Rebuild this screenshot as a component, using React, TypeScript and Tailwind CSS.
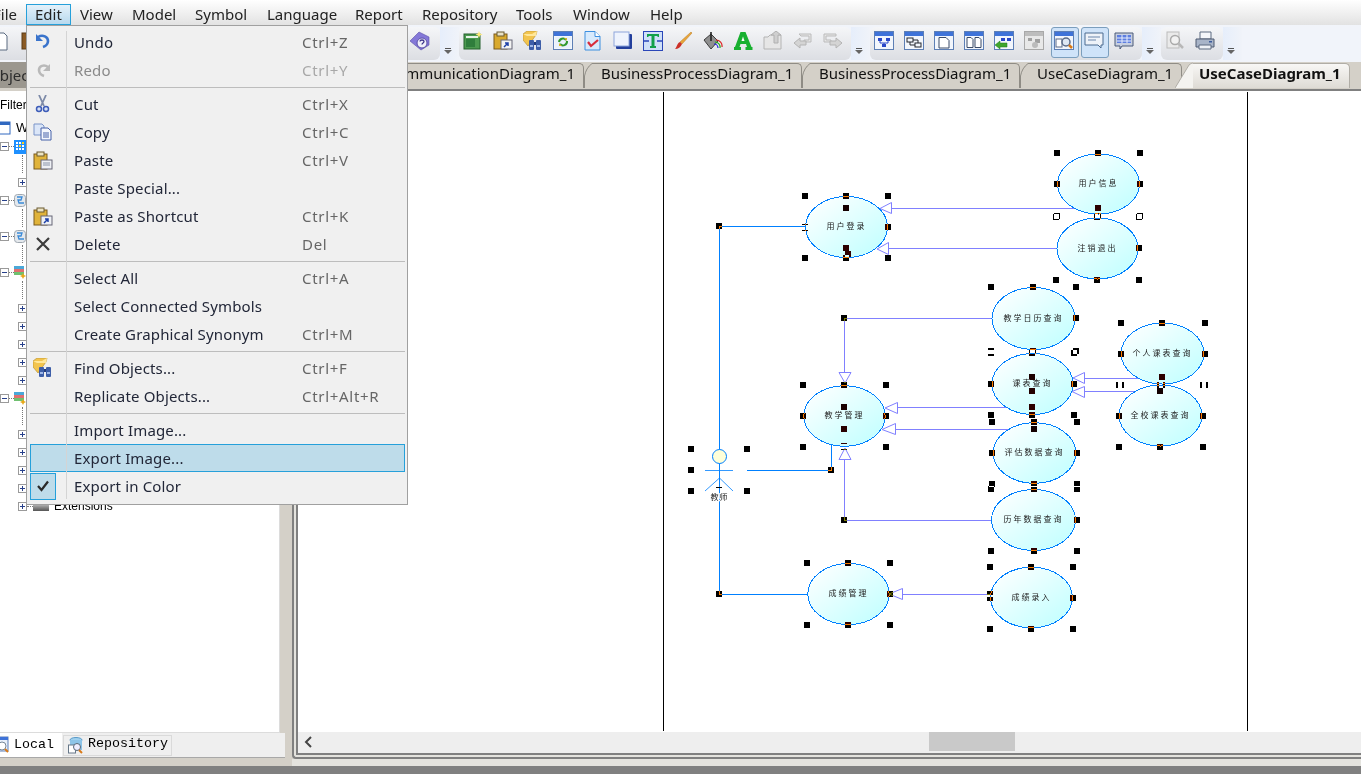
import React from "react";

const I = ({ children }: { children: React.ReactNode }) => (
  <svg width="20" height="20" viewBox="0 0 20 20">
    {children}
  </svg>
);

const WinBase = ({ children, gray = false }: { children?: React.ReactNode; gray?: boolean }) => (
  <>
    <rect x="0.5" y="0.5" width="19" height="18" fill={gray ? "#e8e8e8" : "#f2f6fc"} stroke={gray ? "#a8a8a8" : "#5d7fb5"} />
    <rect x="1" y="1" width="18" height="4" fill={gray ? "#bdbdbd" : "#3f73d8"} />
    {children}
  </>
);

const Clipboard = () => (
  <>
    <rect x="1" y="3" width="13" height="15" fill="#d9a92d" stroke="#7a5a1c" />
    <rect x="4" y="1" width="7" height="4" fill="#e9e2c8" stroke="#6a5a30" />
  </>
);

const IconNew = () => (
  <I>
    <rect x="1" y="3" width="16" height="15" fill="#4c9a50" stroke="#24602c" />
    <rect x="3" y="5" width="12" height="2" fill="#e8f4e8" />
    <rect x="3" y="8" width="9" height="8" fill="#2f7d3c" />
    <path d="M16 0l1 2.500 2.500 1-2.500 1-1 2.500-1-2.500-2.500-1 2.500-1z" fill="#ffe97a" />
  </I>
);
const IconPasteLink = () => (
  <I>
    <Clipboard />
    <rect x="8" y="9" width="11" height="9" fill="#f3f3f3" stroke="#667" />
    <path d="M11 16l4-4m-3 0h3v3" stroke="#1c3fa8" strokeWidth="1.500" fill="none" />
  </I>
);
const IconFind = () => (
  <I>
    <path d="M0 3l4-3h10l-1 4-8 11-5-6z" fill="#f2c44e" stroke="#b08a2c" strokeWidth="0.600" />
    <path d="M0 3h9l5-3-1 5H4z" fill="#ffe79a" />
    <rect x="6" y="9" width="5" height="10" rx="1" fill="#3d5ea8" />
    <rect x="13" y="9" width="5" height="10" rx="1" fill="#3d5ea8" />
    <rect x="11" y="11" width="2" height="3" fill="#223a78" />
    <rect x="7" y="14" width="3" height="2" fill="#9fb8e8" />
    <rect x="14" y="14" width="3" height="2" fill="#9fb8e8" />
  </I>
);
const IconRefresh = () => (
  <I>
    <WinBase>
      <rect x="2" y="6" width="16" height="11" fill="#e9f1fb" />
      <path d="M6 11a4 4 0 0 1 7-2M14 10a4 4 0 0 1-7 3" stroke="#2f9a2f" strokeWidth="2" fill="none" />
      <path d="M11 7l3 0v3zM9 15l-3 0v-3z" fill="#d5b52a" />
    </WinBase>
  </I>
);
const IconDocCheck = () => (
  <I>
    <path d="M2 .5h10l5 5v13.500H2z" fill="#d8eafc" stroke="#3d8fe0" />
    <path d="M12 .5v5h5" fill="#fff" stroke="#3d8fe0" />
    <path d="M5 11l3 4 7-6" stroke="#d82c3c" strokeWidth="2.200" fill="none" />
  </I>
);
const IconBox = () => (
  <I>
    <rect x="3" y="3" width="16" height="15" rx="1" fill="#233f9c" />
    <rect x="1" y="1" width="15" height="14" fill="#eef3fd" stroke="#8ea6dc" />
  </I>
);
const IconT = () => (
  <I>
    <rect x="0.5" y="0.5" width="19" height="19" fill="#cfe0f8" stroke="#2a46b8" />
    <path d="M4 3h12v3h-1.500V5H11.500v10H13v2H7v-2h1.500V5H5.500v1H4z" fill="#12a04a" />
    <path d="M1 10h5M19 10h-5" stroke="#2a46b8" strokeWidth="1.500" />
  </I>
);
const IconBrush = () => (
  <I>
    <path d="M18 1l1 1-10 11-2-2z" fill="#e8a53a" stroke="#b87a20" strokeWidth="0.500" />
    <path d="M7 11l2 2c-1 3-4 5-7 5 2-2 2-6 5-7z" fill="#cc3028" />
  </I>
);
const IconBucket = () => (
  <I>
    <path d="M1 9l7-6 7 7-7 8z" fill="#8f8f8f" stroke="#3c3c3c" />
    <path d="M8 1v9" stroke="#222" strokeWidth="1.600" />
    <path d="M13 9a6 6 0 0 1 6 7" stroke="#d22" strokeWidth="1.200" fill="none" />
    <path d="M12 11a5 5 0 0 1 5 6" stroke="#2a2" strokeWidth="1.200" fill="none" />
    <path d="M11 13a4 4 0 0 1 4 4" stroke="#22d" strokeWidth="1.200" fill="none" />
  </I>
);
const IconA = () => (
  <I>
    <path d="M7.500 1h5l6 15h1v3h-7v-3h1.500l-1-3H7.500l-1 3H8v3H1v-3h1z" fill="#18b030" />
    <path d="M8.500 10h3L10 5.500z" fill="#fff" />
  </I>
);
const IconGrayBox = () => (
  <I>
    <path d="M1 6h4l2-2h11v14H1z" fill="#e6e6e6" stroke="#b4b4b4" />
    <path d="M11 12V4h-3l5-4 5 4h-3v8z" fill="#cfcfcf" stroke="#b0b0b0" />
  </I>
);
const IconBack = () => (
  <I>
    <path d="M6 3h12v8H11v-2h5V5H8z" fill="#e6e6e6" stroke="#bbb" />
    <path d="M7 7L1 12l6 5v-3h6V10H7z" fill="#d4d4d4" stroke="#b4b4b4" />
  </I>
);
const IconFwd = () => (
  <I>
    <path d="M1 3h12v2H3v4h5v2H1z" fill="#e6e6e6" stroke="#bbb" />
    <path d="M13 7l6 5-6 5v-3H7V10h6z" fill="#d4d4d4" stroke="#b4b4b4" />
  </I>
);
const IconTree = () => (
  <I>
    <WinBase>
      <rect x="4" y="7" width="4" height="3" fill="#2a48c8" />
      <rect x="12" y="7" width="4" height="3" fill="#2a48c8" />
      <rect x="8" y="13" width="4" height="3" fill="#2a48c8" />
      <path d="M6 10v2h4v1M14 10v2h-4" stroke="#2a48c8" fill="none" />
    </WinBase>
  </I>
);
const IconTree2 = () => (
  <I>
    <WinBase>
      <rect x="3" y="7" width="6" height="4" fill="#f2f6fc" stroke="#22262e" />
      <rect x="11" y="12" width="6" height="4" fill="#f2f6fc" stroke="#22262e" />
      <path d="M9 9h5v3M6 11v3h5" stroke="#22262e" fill="none" />
    </WinBase>
  </I>
);
const IconDocW = () => (
  <I>
    <WinBase>
      <path d="M5 6.500h7l3 3v7.500H5z" fill="#fff" stroke="#3a4a66" />
    </WinBase>
  </I>
);
const IconDocs = () => (
  <I>
    <WinBase>
      <path d="M3 6.500h4l2 2v8H3zM11 6.500h4l2 2v8h-6z" fill="#fff" stroke="#3a4a66" />
    </WinBase>
  </I>
);
const IconTreeArrow = () => (
  <I>
    <WinBase>
      <rect x="7" y="7" width="4" height="3" fill="#2a48c8" />
      <rect x="13" y="7" width="4" height="3" fill="#2a48c8" />
      <path d="M1 14l5-4v2h7v4H6v2z" fill="#3fa52c" stroke="#1f7a18" strokeWidth="0.500" />
    </WinBase>
  </I>
);
const IconTreeGray = () => (
  <I>
    <WinBase gray>
      <rect x="4" y="7" width="4" height="3" fill="#a0a0a0" />
      <rect x="11" y="8" width="5" height="4" fill="#a0a0a0" />
      <circle cx="11" cy="14" r="3" fill="#bbb" />
    </WinBase>
  </I>
);
const IconWinZoom = () => (
  <I>
    <WinBase>
      <rect x="2" y="8" width="6" height="8" fill="#fff" stroke="#5a6a88" />
      <circle cx="12" cy="11" r="4" fill="#dfe8f4" stroke="#5a6a88" strokeWidth="1.500" />
      <path d="M15 14l3 3" stroke="#d87a18" strokeWidth="2.500" />
    </WinBase>
  </I>
);
const IconComment = () => (
  <I>
    <path d="M1 2h18v12h-2v3l-3-3H1z" fill="#eef2f8" stroke="#4a6a90" />
    <path d="M4 6h12M4 9h8" stroke="#6a86ac" />
  </I>
);
const IconTable = () => (
  <I>
    <path d="M1 2h18v13H8l-2 3v-3H1z" fill="#c8d0e0" stroke="#4a5a78" />
    <rect x="3" y="4" width="14" height="8" fill="#5d7ee0" />
    <path d="M3 7h14M3 10h14M8 4v8M13 4v8" stroke="#e8eefc" />
  </I>
);
const IconPreview = () => (
  <I>
    <rect x="2" y="1" width="12" height="16" fill="#eaeaea" stroke="#bcbcbc" />
    <circle cx="10" cy="9" r="4.500" fill="#f2f2f2" stroke="#aaa" strokeWidth="1.500" />
    <path d="M13 12l5 5" stroke="#b8b8b8" strokeWidth="2.500" />
  </I>
);
const IconPrint = () => (
  <I>
    <path d="M5 1h11v7H5z" fill="#f4f6fa" stroke="#5d6a80" />
    <path d="M1 8h18v8H1z" fill="#a8b4c8" stroke="#4e5a70" />
    <path d="M4 14h12v4H4z" fill="#eef1f6" stroke="#5d6a80" />
    <rect x="14" y="10" width="3" height="1.500" fill="#3a5a9a" />
  </I>
);
const IconHelpBook = () => (
  <I>
    <path d="M0 10L9 1l10 5v8l-8 5z" fill="#8478d8" stroke="#5a50a8" strokeWidth="0.600" />
    <circle cx="12" cy="12" r="5" fill="#f0f0fa" stroke="#5a50a8" />
    <path d="M10 10.500c0-2 4-2 4 0 0 1.500-2 1.500-2 3" stroke="#3c348a" strokeWidth="1.300" fill="none" />
  </I>
);
const IconNewDoc = () => (
  <I>
    <path d="M3 2h11l3 3v14H3z" fill="#fff" stroke="#5a6a80" />
    <path d="M0 0l4 1 1 3" fill="#f2c44e" stroke="#d9a92d" />
  </I>
);
const IconBrown = () => (
  <I>
    <rect x="2" y="2" width="15" height="16" fill="#8a5a24" stroke="#5a3a14" />
  </I>
);

const groupOne = [IconNewDoc, IconBrown, IconFind, IconFind, IconFind, IconFind, IconFind, IconFind, IconFind, IconFind, IconFind, IconFind, IconFind, IconFind, IconHelpBook];
const groupTwo = [IconNew, IconPasteLink, IconFind, IconRefresh, IconDocCheck, IconBox, IconT, IconBrush, IconBucket, IconA, IconGrayBox, IconBack, IconFwd];
const groupThree = [IconTree, IconTree2, IconDocW, IconDocs, IconTreeArrow, IconTreeGray];

const Handle = () => (
  <div className="w-[19px] h-[33px] flex flex-col items-center justify-end pb-[6px] pr-[3px] bg-gradient-to-r from-[#e6eefb] to-[#f0f3f9]">
    <div className="w-[6px] h-[1px] bg-[#555]" />
    <svg width="8" height="4" viewBox="0 0 8 4" className="mt-[1px]">
      <path d="M0 0h8L4 4z" fill="#666" />
    </svg>
  </div>
);

const Cell = ({ children }: { children: React.ReactNode }) => (
  <div className="w-[30px] h-[33px] pl-[3px] pt-[4px] shrink-0">{children}</div>
);

const ActiveCell = ({ children }: { children: React.ReactNode }) => (
  <div className="w-[28px] h-[31px] mr-[2px] pl-[2px] pt-[3px] shrink-0 rounded-[3px] border border-[#7b9ebd] bg-[#cfe3f9]">{children}</div>
);

const Group = ({ children, extra }: { children: React.ReactNode; extra: string }) => (
  <div className={"flex h-[33px] px-[1px] rounded-[6px] bg-gradient-to-b from-[#f5f6f8] to-[#dcdee3] shrink-0 " + extra}>{children}</div>
);

const Toolbar = () => (
  <div className="h-[37px] pt-[2px] flex bg-[#f1f4fa] shrink-0">
    <Group extra="w-[450px] -ml-[10px] justify-end pr-[3px]">
      {groupOne.map((C, i) => (
        <Cell key={i}>
          <C />
        </Cell>
      ))}
    </Group>
    <Handle />
    <Group extra="">
      {groupTwo.map((C, i) => (
        <Cell key={i}>
          <C />
        </Cell>
      ))}
    </Group>
    <Handle />
    <Group extra="">
      {groupThree.map((C, i) => (
        <Cell key={i}>
          <C />
        </Cell>
      ))}
      <ActiveCell>
        <IconWinZoom />
      </ActiveCell>
      <ActiveCell>
        <IconComment />
      </ActiveCell>
      <Cell>
        <IconTable />
      </Cell>
    </Group>
    <Handle />
    <Group extra="">
      <Cell>
        <IconPreview />
      </Cell>
      <Cell>
        <IconPrint />
      </Cell>
    </Group>
    <Handle />
  </div>
);

const menus = [
  { t: "Edit", c: "w-[45px] pl-[8px] border border-[#26a0da] bg-gradient-to-b from-[#e4f1fa] to-[#b8d9ee] h-[21px] mt-[4px]" },
  { t: "View", c: "w-[52px] pl-[9px]" },
  { t: "Model", c: "w-[63px] pl-[9px]" },
  { t: "Symbol", c: "w-[72px] pl-[9px]" },
  { t: "Language", c: "w-[88px] pl-[9px]" },
  { t: "Report", c: "w-[67px] pl-[9px]" },
  { t: "Repository", c: "w-[94px] pl-[9px]" },
  { t: "Tools", c: "w-[57px] pl-[9px]" },
  { t: "Window", c: "w-[77px] pl-[9px]" },
  { t: "Help", c: "w-[60px] pl-[9px]" },
];

const MenuBar = () => (
  <div className="h-[25px] flex bg-gradient-to-b from-[#ffffff] to-[#e2e2e2] shrink-0 text-[15px] text-[#222] font-['Noto_Sans'] whitespace-nowrap">
    <div className="w-[26px] h-[25px] pt-[4px] pr-[9px] flex justify-end leading-[21px] shrink-0">
      <span>File</span>
    </div>
    {menus.map((m) => (
      <div key={m.t} className={"leading-[19px] shrink-0 " + (m.t === "Edit" ? m.c : m.c + " pt-[5px]")}>
        {m.t}
      </div>
    ))}
  </div>
);

type Item = { t: string; k?: string; d?: boolean; icon?: React.ReactNode; cls?: string };

const MIconUndo = () => (
  <svg width="18" height="18" viewBox="0 0 18 18">
    <path d="M4 4c5-3 10 0 10 4 0 3-2 5-5 6" stroke="#3a74cc" strokeWidth="2.600" fill="none" />
    <path d="M2 1v7h7z" fill="#3a74cc" />
  </svg>
);
const MIconRedo = () => (
  <svg width="18" height="18" viewBox="0 0 18 18">
    <path d="M14 6c-4-3-9-1-9 3 0 3 2 5 5 6" stroke="#b9b9b9" strokeWidth="2.600" fill="none" />
    <path d="M16 3v7H9z" fill="#b9b9b9" />
  </svg>
);
const MIconCut = () => (
  <svg width="18" height="18" viewBox="0 0 18 18">
    <path d="M5 0l5 11M12 0L7 11" stroke="#7d8aa8" strokeWidth="1.800" />
    <circle cx="5" cy="14" r="2.500" fill="#d6e0f4" stroke="#3d5cb8" strokeWidth="1.500" />
    <circle cx="12" cy="14" r="2.500" fill="#d6e0f4" stroke="#3d5cb8" strokeWidth="1.500" />
  </svg>
);
const MIconCopy = () => (
  <svg width="20" height="18" viewBox="0 0 20 18">
    <path d="M1 1h8l2 2v9H1z" fill="#dbe6f8" stroke="#7a94c8" />
    <path d="M8 5h7l3 3v9H8z" fill="#f4f7fd" stroke="#4560a8" />
    <path d="M10 10h6M10 12h6M10 14h6" stroke="#4560a8" />
  </svg>
);
const MIconPaste = () => (
  <svg width="20" height="19" viewBox="0 0 20 19">
    <rect x="1" y="3" width="13" height="15" fill="#e0b33a" stroke="#7a5a1c" />
    <rect x="4" y="1" width="7" height="4" fill="#ece4c4" stroke="#6a5a30" />
    <rect x="8" y="9" width="11" height="9" fill="#eef0f4" stroke="#667" />
    <path d="M10 12h7M10 14h7" stroke="#8a94a8" />
  </svg>
);
const MIconPasteLink = () => (
  <svg width="20" height="19" viewBox="0 0 20 19">
    <rect x="1" y="3" width="13" height="15" fill="#e0b33a" stroke="#7a5a1c" />
    <rect x="4" y="1" width="7" height="4" fill="#ece4c4" stroke="#6a5a30" />
    <rect x="8" y="9" width="11" height="9" fill="#eef0f4" stroke="#667" />
    <path d="M11 16l4-4m-3 0h3v3" stroke="#1c3fa8" strokeWidth="1.500" fill="none" />
  </svg>
);
const MIconDelete = () => (
  <svg width="16" height="16" viewBox="0 0 16 16">
    <path d="M2 2l12 12M14 2L2 14" stroke="#3c3c3c" strokeWidth="2.200" />
  </svg>
);

const rows: (Item | "sep")[] = [
  { t: "Undo", k: "Ctrl+Z", icon: <MIconUndo /> },
  { t: "Redo", k: "Ctrl+Y", d: true, icon: <MIconRedo /> },
  "sep",
  { t: "Cut", k: "Ctrl+X", icon: <MIconCut /> },
  { t: "Copy", k: "Ctrl+C", icon: <MIconCopy /> },
  { t: "Paste", k: "Ctrl+V", icon: <MIconPaste /> },
  { t: "Paste Special..." },
  { t: "Paste as Shortcut", k: "Ctrl+K", icon: <MIconPasteLink /> },
  { t: "Delete", k: "Del", icon: <MIconDelete /> },
  "sep",
  { t: "Select All", k: "Ctrl+A" },
  { t: "Select Connected Symbols" },
  { t: "Create Graphical Synonym", k: "Ctrl+M" },
  "sep",
  { t: "Find Objects...", k: "Ctrl+F", icon: <IconFind /> },
  { t: "Replicate Objects...", k: "Ctrl+Alt+R" },
  "sep",
  { t: "Import Image..." },
  { t: "Export Image...", cls: "hl" },
  { t: "Export in Color", cls: "chk" },
];

const MenuRow = ({ item }: { item: Item }) => (
  <div
    className={
      "h-[28px] flex items-center relative " +
      (item.cls === "hl" ? "bg-[#bedcea] border border-[#26a0da] " : "border border-transparent ") +
      (item.d ? "text-[#8a8a8a]" : "text-[#222738]")
    }
  >
    <div
      className={
        "w-[26px] h-[27px] flex items-center justify-center shrink-0 -ml-[1px] " +
        (item.cls === "chk" ? "bg-[#bedcea] border border-[#26a0da]" : "")
      }
    >
      {item.cls === "chk" ? (
        <svg width="12" height="12" viewBox="0 0 12 12">
          <path d="M1 6l3.500 4L11 1.500" stroke="#2a2a2a" strokeWidth="2.200" fill="none" />
        </svg>
      ) : (
        item.icon
      )}
    </div>
    <div className="w-[246px] pl-[18px] shrink-0 tracking-[0.15px]">{item.t}</div>
    <div className={"tracking-[0.7px] " + (item.d ? "text-[#a8a8a8]" : "text-[#666]")}>{item.k}</div>
  </div>
);

const Menu = () => (
  <div className="absolute left-[26px] top-[25px] w-[382px] h-[480px] border border-[#a0a0a0] bg-[#f0f0f0] pt-[2px] pl-[3px] pr-[2px] font-['Noto_Sans'] text-[15px] whitespace-nowrap z-10">
    <div className="absolute left-[39px] top-[5px] bottom-[5px] w-[1px] bg-[#d4d4d4] z-10" />
    {rows.map((r, i) =>
      r === "sep" ? (
        <div key={i} className="h-[6px] flex items-center">
          <div className="h-[1px] w-full bg-[#bdbdbd]" />
        </div>
      ) : (
        <MenuRow key={i} item={r} />
      )
    )}
  </div>
);

const Box = ({ plus }: { plus?: boolean }) => (
  <div className="w-[9px] h-[9px] border border-[#9a9a9a] bg-white relative shrink-0">
    <div className="absolute left-[1px] top-[3px] w-[5px] h-[1px] bg-[#27408b]" />
    {plus && <div className="absolute left-[3px] top-[1px] w-[1px] h-[5px] bg-[#27408b]" />}
  </div>
);

const TreeGrid = () => (
  <svg width="12" height="15" viewBox="0 0 12 15" className="shrink-0">
    <rect x="0" y="1" width="12" height="14" fill="#1e90ff" />
    <rect x="2" y="3" width="2" height="2" fill="#fff" />
    <rect x="5" y="3" width="2" height="2" fill="#fff" />
    <rect x="8" y="3" width="2" height="2" fill="#ffd21e" />
    <rect x="2" y="6" width="2" height="2" fill="#fff" />
    <rect x="5" y="6" width="2" height="2" fill="#ffd21e" />
    <rect x="8" y="6" width="2" height="2" fill="#fff" />
    <rect x="2" y="9" width="2" height="2" fill="#fff" />
    <rect x="5" y="9" width="2" height="2" fill="#fff" />
    <rect x="8" y="9" width="2" height="2" fill="#fff" />
  </svg>
);
const TreeFlow = () => (
  <svg width="12" height="15" viewBox="0 0 12 15" className="shrink-0">
    <rect x="0.500" y="1.500" width="11" height="12" rx="3" fill="#e4e8ec" stroke="#a0a8b0" />
    <path d="M3 4h5l-1 3H4l1 3h5" stroke="#3a8ad8" strokeWidth="1.300" fill="none" />
  </svg>
);
const TreeStack = () => (
  <svg width="12" height="15" viewBox="0 0 12 15" className="shrink-0">
    <rect x="0" y="1" width="10" height="3" fill="#4aa8d8" />
    <rect x="0" y="4" width="10" height="3" fill="#e07070" />
    <rect x="0" y="7" width="10" height="3" fill="#70c070" />
    <path d="M9 8l1 2 2 1-2 1-1 2-1-2-2-1 2-1z" fill="#e8a818" />
  </svg>
);

const treeRows: number[] = [0, 2, 1, 0, 2, 0, 2, 0, 2, 1, 1, 1, 1, 1, 0, 2, 1, 1, 1, 1];
const treeIcons: Record<number, React.ReactNode> = {
  0: <TreeGrid />,
  3: <TreeFlow />,
  5: <TreeFlow />,
  7: <TreeStack />,
  14: <TreeStack />,
};

const LeftPanel = () => (
  <div className="w-[285px] flex flex-col shrink-0">
    <div className="h-[26px] bg-[#9b978f] text-[15px] leading-[26px] text-[#2c2c2c] font-['Noto_Sans'] -indent-[12px] overflow-hidden shrink-0 whitespace-nowrap">Object Browser</div>
    <div className="h-[3px] bg-[#d4d0c8] shrink-0" />
    <div className="flex-1 bg-white border-r border-b border-[#dcdcdc] mr-[5px] font-['Liberation_Sans'] text-[12px] text-black overflow-hidden">
      <div className="h-[28px] pt-[7px] leading-[14px]">Filter:</div>
      <div className="h-[18px] flex items-center">
        <svg width="11" height="14" viewBox="0 0 11 14" className="shrink-0">
          <rect x="-3" y="1" width="13" height="12" fill="#fff" stroke="#3068c0" />
          <rect x="-3" y="1" width="13" height="3" fill="#3068c0" />
        </svg>
        <span className="ml-[5px] text-[13px]">Workspace</span>
      </div>
      {treeRows.map((lv, i) => (
        <div key={i} className="h-[18px] flex items-center">
          {lv === 0 && (
            <>
              <Box />
              <div className="w-[5px] border-t border-dotted border-[#777]" />
              {treeIcons[i]}
            </>
          )}
          {lv === 1 && (
            <div className="ml-[18px]">
              <Box plus />
            </div>
          )}
          {lv === 2 && <div className="ml-[22px] h-[18px] border-l border-dotted border-[#777]" />}
        </div>
      ))}
      <div className="h-[18px] flex items-center">
        <div className="ml-[18px]">
          <Box plus />
        </div>
        <div className="w-[6px] border-t border-dotted border-[#777]" />
        <div className="w-[16px] h-[10px] bg-gradient-to-b from-[#f0f0f0] to-[#555]" />
        <span className="ml-[5px]">Extensions</span>
      </div>
    </div>
    <div className="h-[25px] bg-[#efefef] border-b border-[#a8a8a8] flex shrink-0 font-['Liberation_Mono'] text-[13.33px] text-black">
      <div className="w-[62px] bg-white flex items-center">
        <svg width="10" height="18" viewBox="0 0 10 18" className="shrink-0">
          <rect x="-8" y="1" width="16" height="14" fill="#e8f0fb" stroke="#5d7fb5" />
          <rect x="-8" y="1" width="16" height="3" fill="#3f73d8" />
          <circle cx="2" cy="10" r="4" fill="#fff" stroke="#789" />
          <path d="M5 13l3 3" stroke="#d87a18" strokeWidth="2" />
        </svg>
        <span className="ml-[4px]">Local</span>
      </div>
      <div className="ml-[1px] w-[109px] h-[21px] mt-[2px] border border-[#dadada] flex items-center pl-[4px]">
        <svg width="16" height="17" viewBox="0 0 16 17" className="shrink-0">
          <ellipse cx="8" cy="3" rx="6" ry="2.500" fill="#9fd0ee" stroke="#5a9ac8" />
          <rect x="2" y="3" width="12" height="10" fill="#8cc4e8" />
          <rect x="0.500" y="8" width="7" height="8" fill="#fff" stroke="#678" />
          <circle cx="9" cy="10" r="3.500" fill="#eef" stroke="#567" />
          <path d="M11 13l3 3" stroke="#d87a18" strokeWidth="2" />
        </svg>
        <span className="ml-[4px] -mt-[3px]">Repository</span>
      </div>
    </div>
    <div className="h-[8px] shrink-0" />
  </div>
);

const Slant = ({ active }: { active?: boolean }) =>
  active ? (
    <svg width="18" height="26" viewBox="0 0 18 26" className="shrink-0 relative z-[1]">
      <path d="M0 26L14 3q2-2 4-2V26z" fill="#f4f3f0" />
      <path d="M0 26L14 3q2-2 4-2" fill="none" stroke="#b0ada6" />
    </svg>
  ) : (
    <svg width="8" height="26" viewBox="0 0 8 26" className="shrink-0">
      <path d="M0.500 26V14Q2 6 8 1.500" fill="none" stroke="#8f8c85" />
    </svg>
  );

const Tab = ({ t, w }: { t: string; w: string }) => (
  <>
    <Slant />
    <div className={"h-[25px] mt-[1px] border-t border-r border-[#8f8c85] rounded-tr-[5px] pl-[9px] leading-[18px] shrink-0 " + w}>{t}</div>
  </>
);

const TabRow = () => (
  <div className="h-[27px] flex bg-[#d4d0c8] shrink-0 font-['Noto_Sans'] text-[15px] text-[#111] whitespace-nowrap overflow-hidden">
    <div className="w-[292px] h-[25px] mt-[1px] border-t border-r border-[#8f8c85] rounded-tr-[5px] pr-[8px] flex justify-end leading-[18px] shrink-0">CommunicationDiagram_1</div>
    <Tab t="BusinessProcessDiagram_1" w="w-[210px]" />
    <Tab t="BusinessProcessDiagram_1" w="w-[210px]" />
    <Tab t="UseCaseDiagram_1" w="w-[154px]" />
    <div className="-ml-[7px] flex shrink-0">
      <Slant active />
      <div className="w-[157px] h-[25px] mt-[1px] border-t border-r border-[#b0ada6] rounded-tr-[5px] pl-[6px] leading-[18px] font-bold bg-gradient-to-b from-[#f8f7f5] to-[#dedbd5]">UseCaseDiagram_1</div>
    </div>
  </div>
);

type El = { cx: number; cy: number; rx: number; ry: number; t: string; hx: number[]; hy: number[] };
const els: El[] = [
  { cx: 846.5, cy: 227, rx: 41, ry: 30.5, t: "用户登录", hx: [805, 846, 888], hy: [196, 227, 258] },
  { cx: 1098.5, cy: 184, rx: 41, ry: 30, t: "用户信息", hx: [1057, 1098, 1140], hy: [153, 184, 216] },
  { cx: 1097.5, cy: 248.5, rx: 40.5, ry: 30.5, t: "注销退出", hx: [1056, 1097, 1139], hy: [217, 248, 280] },
  { cx: 1033.5, cy: 318.5, rx: 41.5, ry: 31, t: "教学日历查询", hx: [991, 1033, 1076], hy: [287, 318, 351] },
  { cx: 1032.5, cy: 384, rx: 40.5, ry: 30.5, t: "课表查询", hx: [991, 1032, 1074], hy: [353, 384, 415] },
  { cx: 1034.5, cy: 453, rx: 41.3, ry: 30.3, t: "评估数据查询", hx: [992, 1034, 1077], hy: [422, 453, 484] },
  { cx: 1033.5, cy: 520, rx: 42, ry: 30.5, t: "历年数据查询", hx: [991, 1034, 1077], hy: [489, 520, 551] },
  { cx: 1162.5, cy: 353.5, rx: 41.3, ry: 30.5, t: "个人课表查询", hx: [1121, 1162, 1205], hy: [323, 354, 385] },
  { cx: 1160.5, cy: 415.5, rx: 41.3, ry: 30.5, t: "全校课表查询", hx: [1119, 1160, 1203], hy: [385, 416, 447] },
  { cx: 844.5, cy: 416, rx: 40.7, ry: 30.3, t: "教学管理", hx: [803, 844, 886], hy: [385, 416, 447] },
  { cx: 848.5, cy: 594, rx: 40.7, ry: 30.5, t: "成绩管理", hx: [807, 848, 890], hy: [563, 594, 625] },
  { cx: 1031.5, cy: 597.5, rx: 41, ry: 30.3, t: "成绩录入", hx: [990, 1031, 1073], hy: [567, 598, 629] },
];

const elHandles = els.flatMap((e) => {
  const out: [number, number][] = [];
  e.hx.forEach((x, i) =>
    e.hy.forEach((y, j) => {
      if (!(i === 1 && j === 1)) out.push([x, y]);
    })
  );
  return out;
});

const extraHandles: [number, number][] = [
  [846, 208], [846, 248], [848, 254], [805, 228],
  [1098, 208], [1056, 248], [991, 318], [991, 520],
  [844, 407], [844, 429], [844, 446], [807, 594],
  [1032, 377], [1032, 391], [1032, 407], [1034, 429],
  [1162, 377], [1160, 391], [990, 594],
  [719, 226], [719, 594], [844, 318], [844, 520], [831, 470],
  [691, 449], [747, 449], [691, 470], [691, 491], [747, 491],
];

const purple = "#8080ff";
const blue = "#0080ff";

const Diagram = () => (
  <svg className="absolute inset-0 w-full h-full font-['Noto_Sans_CJK_SC']" width="1063" height="641">
    <defs>
      <linearGradient id="g" x1="0" y1="0" x2="1" y2="1">
        <stop offset="0.1" stopColor="#fbffff" />
        <stop offset="0.9" stopColor="#c4ffff" />
      </linearGradient>
    </defs>
    <rect width="1063" height="641" fill="#fff" />
    <g transform="translate(-298 -91)">
      <g shapeRendering="crispEdges" stroke="#000" fill="none">
        <path d="M663.500 92v639M1247.500 92v639" />
      </g>
      <g shapeRendering="crispEdges" fill="none" stroke={blue}>
        <path d="M806 226.500H719.500V594.500H808M747 470.500H831.500V440" />
      </g>
      <g shapeRendering="crispEdges" fill="none" stroke={purple}>
        <path d="M1075 208.500H890M1060 248.500H888M1000 318.500H844.500V372M1010 407.500H897M1010 429.500H895M1000 520.500H844.500V459M1140 378.500H1084M1136 391.500H1084M1000 594.500H902" />
      </g>
      {els.map((e) => (
        <ellipse key={e.t} cx={e.cx} cy={e.cy} rx={e.rx} ry={e.ry} fill="url(#g)" stroke={blue} shapeRendering="crispEdges" />
      ))}
      <g fill="#fff" stroke={purple}>
        <path d="M880 208.500L891.500 202.500V213.500z" />
        <path d="M877 249L888.500 242.500V254.500z" />
        <path d="M845 383L839 372.500H851z" />
        <path d="M885 408L897.500 402.500V413.500z" />
        <path d="M882 429.500L895.500 423.500V434.500z" />
        <path d="M845 448L839 459.500H851z" />
        <path d="M1073 378L1084.500 372.500V383.500z" />
        <path d="M1072 391.500L1084.500 386.500V397.500z" />
        <path d="M889 594L902.500 588.500V599.500z" />
      </g>
      <circle cx="719.500" cy="456.500" r="7" fill="#ffffd8" stroke={blue} />
      <path d="M705 470.500H733M719.500 464V478M719.500 478L705 491M719.500 478L733 491" stroke={blue} fill="none" strokeOpacity="0.8" />
      <rect x="716" y="487" width="6" height="1" fill="#000" />
      <text x="719.500" y="500" fontSize="8" textAnchor="middle" letterSpacing="1" fill="#222" stroke="#fff" strokeWidth="2" paintOrder="stroke">教师</text>
      {els.map((e) => (
        <text key={e.t} x={e.cx} y={e.cy + 2} fontSize="8" textAnchor="middle" letterSpacing="2" fill="#222">
          {e.t}
        </text>
      ))}
      {[...elHandles, ...extraHandles].map(([x, y], i) => (
        <rect key={i} x={x - 3} y={y - 3} width="6" height="6" fill="#fff" className="mix-blend-difference" shapeRendering="crispEdges" />
      ))}
    </g>
  </svg>
);

const MainPane = () => (
  <div className="flex-1 flex flex-col min-w-0">
    <TabRow />
    <div className="h-[2px] bg-[#808080] shrink-0" />
    <div className="flex-1 border-l-2 border-b-2 border-[#808080] rounded-bl-[4px] pl-[2px] pb-[2px] bg-[#e4e3de] flex flex-col min-h-0">
      <div className="flex-1 border-l-2 border-b-2 border-[#808080] flex flex-col min-h-0">
        <div className="flex-1 relative bg-white overflow-hidden">
          <Diagram />
        </div>
        <div className="h-[21px] bg-[#eeeeee] flex shrink-0">
          <svg width="16" height="20" viewBox="0 0 16 20" className="ml-[2px] shrink-0">
            <path d="M11 5L6 10l5 5" stroke="#444" strokeWidth="2" fill="none" />
          </svg>
          <div className="ml-[613px] w-[86px] h-[19px] bg-[#c9c9c9]" />
        </div>
      </div>
    </div>
    <div className="h-[7px] bg-[#e4e3de] shrink-0" />
  </div>
);

export default function App() {
  return (
    <div className="w-[1361px] h-[774px] relative overflow-hidden bg-[#d4d0c8] flex flex-col">
      <MenuBar />
      <Toolbar />
      <div className="h-[704px] flex shrink-0">
        <LeftPanel />
        <div className="w-[7px] shrink-0" />
        <MainPane />
      </div>
      <div className="flex-1 bg-[#808080]" />
      <Menu />
    </div>
  );
}
